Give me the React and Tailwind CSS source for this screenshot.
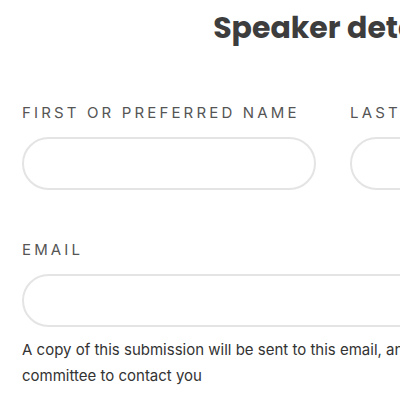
export default function App() {
  return (
    <div className="w-[400px] h-[400px] overflow-hidden bg-white">
      <div className="w-[666px] px-[22px] font-['Inter',sans-serif]">
        <h1 className="pt-[9px] text-center text-[30px] leading-[38px] font-bold text-[#3d3d3d] font-['Poppins','Inter',sans-serif]">
          Speaker details
        </h1>
        <div className="mt-[56px] grid grid-cols-2 gap-x-[34px]">
          <div className="flex flex-col">
            <label className="text-[15px] leading-[20px] tracking-[0.21em] uppercase text-[#555]">
              First or preferred name
            </label>
            <input className="mt-[14px] h-[53px] rounded-full border-2 border-[#e4e4e4] px-5 outline-none" />
          </div>
          <div className="flex flex-col">
            <label className="text-[15px] leading-[20px] tracking-[0.21em] uppercase text-[#555]">
              Last name
            </label>
            <input className="mt-[14px] h-[53px] rounded-full border-2 border-[#e4e4e4] px-5 outline-none" />
          </div>
        </div>
        <div className="mt-[50px] flex flex-col">
          <label className="text-[15px] leading-[20px] tracking-[0.21em] uppercase text-[#555]">
            Email
          </label>
          <input className="mt-[14px] h-[53px] rounded-full border-2 border-[#e4e4e4] px-5 outline-none" />
          <p className="mt-[10px] max-w-[575px] text-[15px] leading-[26px] text-[#333]">
            A copy of this submission will be sent to this email, and it will be used by the committee to contact you
          </p>
        </div>
      </div>
    </div>
  );
}
